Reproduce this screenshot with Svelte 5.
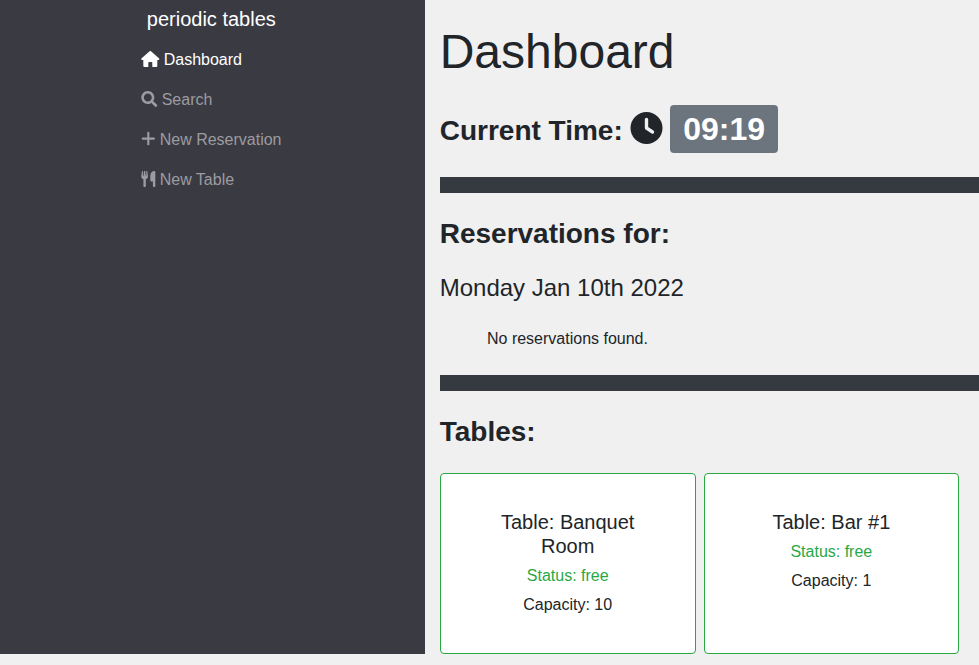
<script>
  const links = [
    { label: 'Dashboard', active: true, w: 576, d: 'M575.8 255.5c0 18-15 32.1-32 32.1h-32l.7 160.2V472c0 22.1-17.9 40-40 40H352V384c0-17.7-14.3-32-32-32H256c-17.7 0-32 14.3-32 32v128H104c-22.1 0-40-17.9-40-40V287.6H32c-18 0-32-14-32-32.1c0-9 3-17 10-24L266.4 8c7-7 15-8 22-8s15 2 21 7L564.8 231.5c8 7 12 15 11 24z' },
    { label: 'Search', w: 512, d: 'M505 442.700L405.300 343c-4.500-4.500-10.600-7-17-7H372c27.600-35.300 44-79.700 44-128C416 93.100 322.900 0 208 0S0 93.100 0 208s93.100 208 208 208c48.300 0 92.700-16.400 128-44v16.300c0 6.400 2.500 12.500 7 17l99.700 99.700c9.400 9.400 24.600 9.400 33.900 0l28.300-28.300c9.400-9.400 9.400-24.600.1-34zM208 336c-70.700 0-128-57.200-128-128 0-70.700 57.200-128 128-128 70.700 0 128 57.200 128 128 0 70.700-57.200 128-128 128z' },
    { label: 'New Reservation', w: 448, d: 'M438 240c0 19.900-16.100 36-36 36H258v144c0 19.900-15.200 36-34 36s-34-16.100-34-36V276H46c-19.900 0-36-16.100-36-36s16.100-36 36-36h144V60c0-19.900 15.200-36 34-36s34 16.100 34 36v144h144c19.900 0 36 16.100 36 36z' },
    { label: 'New Table', w: 448, d: 'M0 150L20 16C22 5 28 0 37 0C48 0 54 7 54 17L50 155H70L86 16C88 5 93 0 101 0H111C119 0 124 5 126 16L142 155H162L158 17C158 7 164 0 175 0C184 0 190 5 192 16L212 150C219 205 190 247 144 263V480C144 500 132 512 106 512C80 512 68 500 68 480V263C22 247 -7 205 0 150zM448 24V480C448 500 434 512 410 512C386 512 372 500 372 480V336H320C300 336 288 324 288 304V150C288 60 352 0 424 0C440 0 448 8 448 24z' },
  ];
  const tables = [
    { name: 'Banquet Room', capacity: 10 },
    { name: 'Bar #1', capacity: 1 },
  ];
</script>

<div class="app">
  <nav>
    <div class="menu">
      <div class="brand">periodic tables</div>
      {#each links as link}
        <a class:active={link.active} href="#top">
          <svg viewBox="-10 0 {link.w} 512" style:width="{link.w / 32}px"><path d={link.d} /></svg>
          <span>{link.label}</span>
        </a>
      {/each}
    </div>
  </nav>
  <main>
    <h1>Dashboard</h1>
    <div class="time">
      <b>Current Time:</b>
      <svg viewBox="0 0 512 512"><circle cx="256" cy="256" r="256" /><path class="hands" d="M256 120V256L352 320" /></svg>
      <strong class="badge">09:19</strong>
    </div>
    <div class="bar"></div>
    <h2>Reservations for:</h2>
    <h3>Monday Jan 10th 2022</h3>
    <p class="empty">No reservations found.</p>
    <div class="bar"></div>
    <h2>Tables:</h2>
    <div class="cards">
      {#each tables as table}
        <article>
          <h4>Table: {table.name}</h4>
          <p class="free">Status: free</p>
          <p>Capacity: {table.capacity}</p>
        </article>
      {/each}
    </div>
  </main>
</div>

<style>
  :global(body) { background: #f0f0f0; overflow: hidden; }
  .app { display: flex; width: 979px; height: 665px; overflow: hidden; font: 16px/24px "Liberation Sans", Arial, sans-serif; color: #212529; }
  nav { flex: none; width: 425px; height: 654px; background: #3a3a43; display: flex; }
  .menu { padding: 4px 0 0 141.3px; }
  .brand { font-size: 20px; line-height: 30px; color: #fff; padding-left: 5.5px; margin-bottom: 5px; }
  a { display: flex; align-items: center; gap: 4.4px; height: 40px; color: #9c9ca0; text-decoration: none; white-space: nowrap; }
  a.active { color: #fff; }
  a svg { height: 16px; flex: none; overflow: visible; }
  a span { padding-top: 2px; }
  svg { display: block; fill: currentColor; }
  .hands { fill: none; stroke: #f0f0f0; stroke-width: 54; stroke-linecap: round; stroke-linejoin: round; }
  main { flex: 1; min-width: 0; padding-left: 14.7px; }
  h1, h2, h3, h4, p { margin: 0; font-weight: 500; }
  h1 { font-size: 48px; font-weight: 400; line-height: 58px; padding-top: 23px; }
  .time { display: flex; height: 48px; margin-top: 24px; }
  .time b { font-size: 28px; line-height: 34px; padding-top: 9px; white-space: nowrap; width: 190.3px; }
  .time svg { width: 33px; height: 32px; margin-top: 7px; }
  .badge { margin-left: 7.2px; width: 108px; height: 48px; border-radius: 4px; background: #6c757d; color: #fff; font-size: 32px; line-height: 48px; text-align: center; }
  .bar { height: 16px; margin-top: 24px; background: #343a40; }
  h2 { font-size: 28px; font-weight: 700; line-height: 34px; margin-top: 24px; }
  h3 { font-size: 24px; font-weight: 400; line-height: 29px; margin-top: 22px; }
  p { font-weight: 400; }
  .empty { margin: 25px 0 0 47.3px; }
  .cards { display: flex; gap: 8px; margin-top: 24px; }
  article { box-sizing: border-box; width: 256px; height: 181px; border: 1px solid #28a745; border-radius: 4px; background: #fff; text-align: center; padding: 36px 47px; }
  article + article { width: 255.3px; }
  h4 { font-size: 20px; font-weight: 400; line-height: 24px; margin-bottom: 6px; }
  .free { color: #28a745; margin-bottom: 5px; }
</style>
